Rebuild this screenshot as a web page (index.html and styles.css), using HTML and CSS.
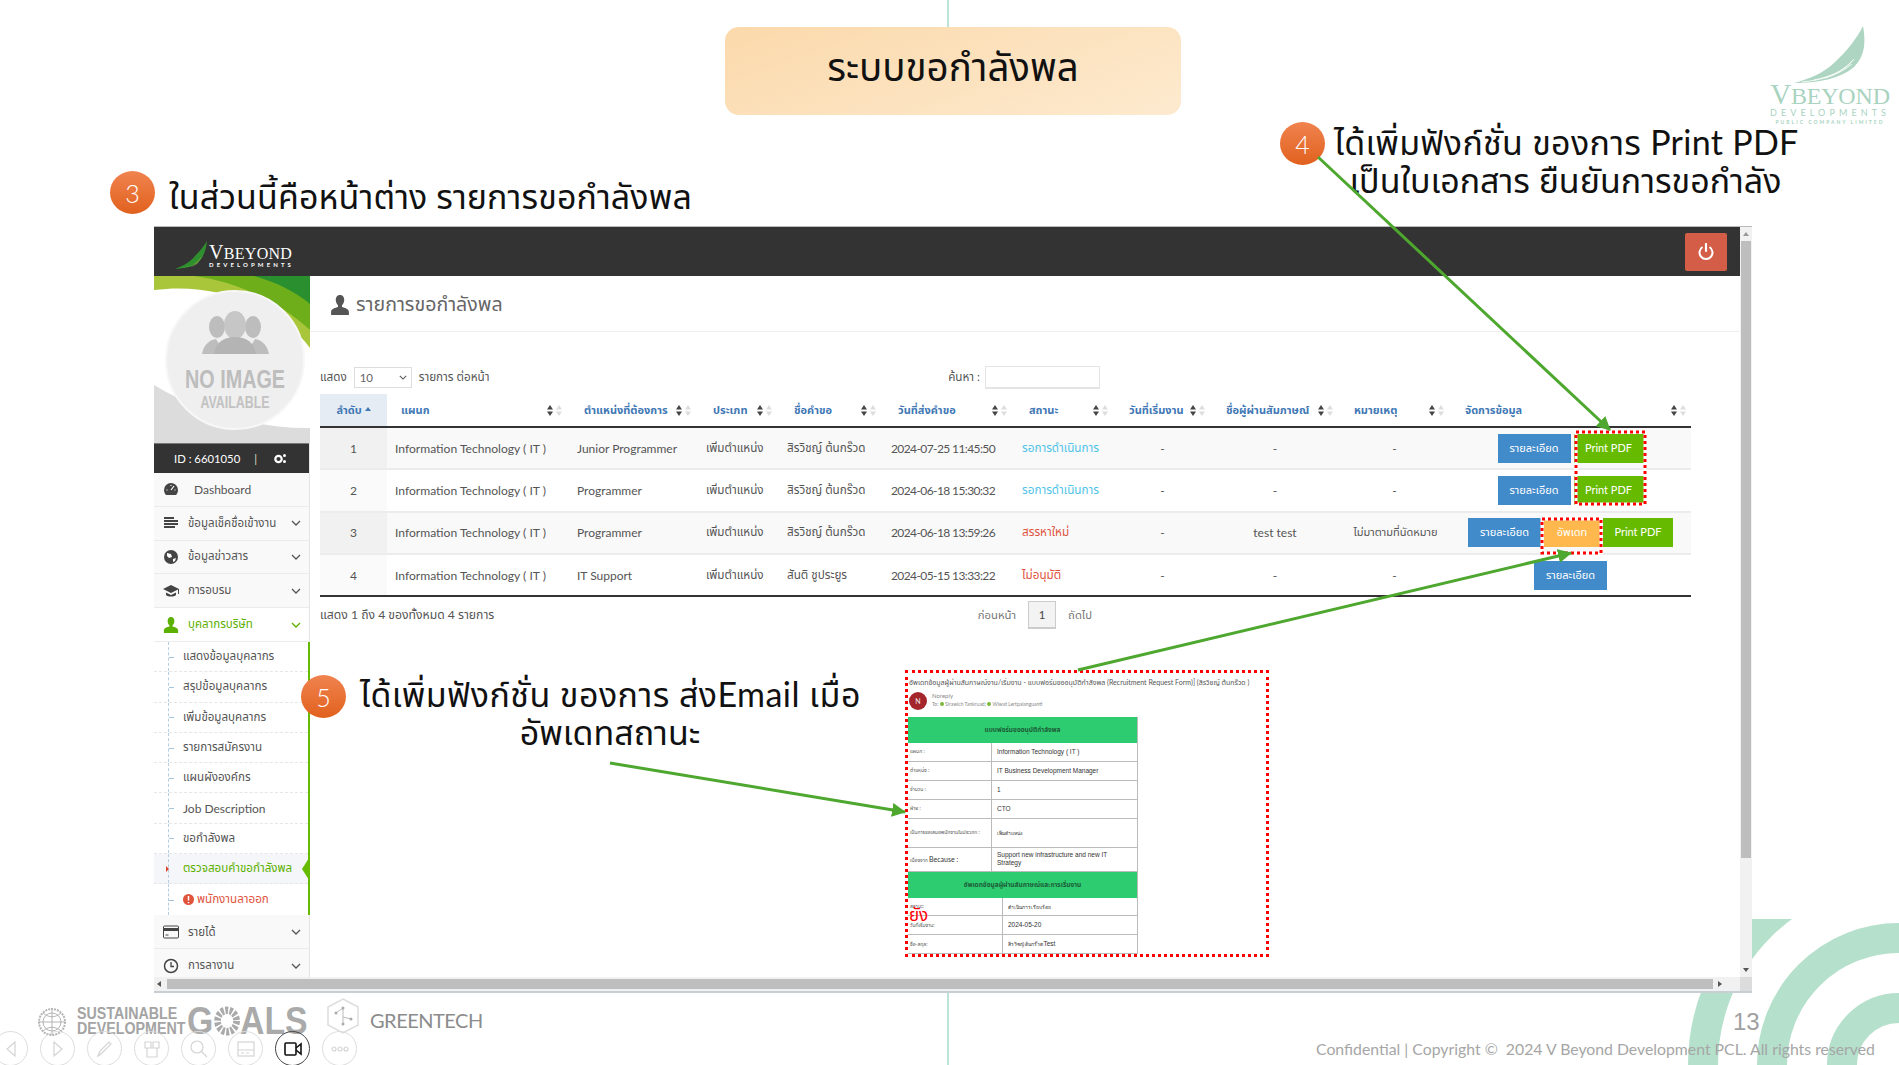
FILE: index.html
```html
<!DOCTYPE html>
<html lang="th">
<head>
<meta charset="utf-8">
<title>ระบบขอกำลังพล</title>
<link rel="stylesheet" href="styles.css">
</head>
<body>
<svg class="defs" width="0" height="0" aria-hidden="true">
  <symbol id="sort" viewBox="0 0 15 11"><path d="M3 0l3 4.400H0zM3 11L0 6.600h6z" fill="#444"/><path d="M12 0l3 4.400H9zM12 11L9 6.600h6z" fill="#ddd"/></symbol>
  <symbol id="chev" viewBox="0 0 10 6"><path d="M1 1l4 4 4-4" fill="none" stroke="currentColor" stroke-width="1.300"/></symbol>
  <symbol id="user" viewBox="0 0 18 18"><path d="M9 0c2.600 0 3.800 2 3.800 4.600 0 2-.9 3.800-2 4.700v1.500c2.200.7 6.200 1.700 6.200 4.200V18H1v-3c0-2.500 4-3.500 6.200-4.200V9.300c-1.100-.9-2-2.700-2-4.700C5.200 2 6.400 0 9 0z" fill="currentColor"/></symbol>
</svg>
<div class="slide">
  <svg class="decor" width="1899" height="1065" viewBox="0 0 1899 1065" aria-hidden="true">
    <defs><clipPath id="ringclip"><rect x="1500" y="919" width="399" height="146"/></clipPath></defs>
    <path d="M948 0V27M948 990V1065" stroke="#a3dcc9" stroke-width="1.500"/>
    <g fill="none" stroke="#b5e0cc" stroke-width="30" clip-path="url(#ringclip)">
      <circle cx="1899" cy="1065" r="196"/><circle cx="1899" cy="1065" r="127"/><circle cx="1899" cy="1065" r="57"/>
    </g>
  </svg>

  <div class="title-box">ระบบขอกำลังพล</div>

  <div class="corner-logo">
    <svg width="72" height="58" viewBox="0 0 72 58" aria-hidden="true"><path d="M69 0c3 16 2 30-9 41-14 12-36 16-60 16 15-4 30-10 41-21C53 25 63 12 69 0z" fill="#aed5c2"/><path d="M8 56c20-2 37-7 50-18M20 54c15-3 28-8 38-19M30 52c12-3 22-9 30-19" stroke="#fff" fill="none" stroke-width=".8"/></svg>
    <div class="corner-name"><span class="big">V</span>BEYOND</div>
    <div class="corner-dev">DEVELOPMENTS</div>
    <div class="corner-pcl">PUBLIC COMPANY LIMITED</div>
  </div>

  <div class="badge badge-3">3</div>
  <div class="callout callout-3">ในส่วนนี้คือหน้าต่าง รายการขอกำลังพล</div>
  <div class="badge badge-4">4</div>
  <div class="callout callout-4"><span class="l-wide">ได้เพิ่มฟังก์ชั่น ของการ Print PDF</span><br><span>เป็นใบเอกสาร ยืนยันการขอกำลัง</span></div>

  <div class="window">
    <div class="app">
      <header class="topbar">
        <div class="brand">
          <svg width="33" height="28" viewBox="0 0 33 28" aria-hidden="true"><path d="M32 0c-1 10-4 19-13 24-5 3-12 3-19 4 8-3 15-7 20-13 5-5 9-10 12-15z" fill="#2f8f2f"/><path d="M28 14c-3 7-10 11-22 13 10-1 18-6 22-13z" fill="#8cc63f"/><path d="M25 19c-3 4-8 7-14 8 6-1 11-3 14-8z" fill="#d7e36a"/></svg>
          <div class="brand-text"><div class="brand-name"><span class="big">V</span>BEYOND</div><div class="brand-sub">DEVELOPMENTS</div></div>
        </div>
        <button class="power" aria-label="ออกจากระบบ"><svg width="16" height="18" viewBox="0 0 16 18"><path d="M8 1v7" stroke="#fff" stroke-width="2.200" stroke-linecap="round"/><path d="M4.500 4A6.500 6.500 0 1 0 11.500 4" fill="none" stroke="#fff" stroke-width="2"/></svg></button>
      </header>
      <div class="body">
        <aside class="sidebar">
          <div class="avatar">
            <svg width="156" height="167" viewBox="0 0 156 167" role="img">
              <rect width="156" height="167" fill="#fff"/>
              <path d="M0 0h156v72C130 36 70 5 0 14z" fill="#a9c63a"/>
              <path d="M40 0h116v54C125 26 85 6 40 0z" fill="#6fae1b"/>
              <path d="M100 0h56v28c-14-12-34-22-56-28z" fill="#2a8f2e"/>
              <path d="M0 109c50 30 110 44 156 43v15H0z" fill="#dcdcdc"/>
              <circle cx="81" cy="84" r="69" fill="#efefef"/>
              <circle cx="81" cy="84" r="69" fill="none" stroke="#f7f7f7" stroke-width="2"/>
              <g fill="#bdbdbd"><ellipse cx="63" cy="51" rx="8" ry="11"/><ellipse cx="99" cy="51" rx="8" ry="11"/><path d="M48 78c2-10 8-14 14-15l9 15zM115 78c-2-10-8-14-14-15l-9 15z"/></g>
              <ellipse cx="81" cy="49" rx="11" ry="14" fill="#c6c6c6"/><path d="M60 78c2-12 10-17 21-17s19 5 21 17z" fill="#b4b4b4"/>
              <text x="81" y="112" class="noimg-a" textLength="100" lengthAdjust="spacingAndGlyphs">NO IMAGE</text>
              <text x="81" y="132" class="noimg-b" textLength="69" lengthAdjust="spacingAndGlyphs">AVAILABLE</text>
            </svg>
          </div>
          <div class="idbar"><span>ID : 6601050</span><span class="idsep">|</span><svg width="13" height="11" viewBox="0 0 13 11" aria-hidden="true"><circle cx="4.500" cy="6" r="3.200" fill="none" stroke="#fff" stroke-width="2.200"/><circle cx="10.500" cy="2.500" r="1.500" fill="#fff"/><circle cx="10.500" cy="8.500" r="1.500" fill="#fff"/></svg></div>
          <nav class="menu">
            <a class="item"><svg class="ico" viewBox="0 0 16 16"><path d="M8 2a7 7 0 0 0-7 7c0 2 .8 3.700 2 5h10c1.200-1.300 2-3 2-5a7 7 0 0 0-7-7z" fill="#444"/><path d="M8 9l3-4M3.500 9h1M11.500 9h1M8 4v1" stroke="#fff" stroke-width="1.200"/></svg><span class="lbl lbl-dash">Dashboard</span></a>
            <a class="item"><svg class="ico" viewBox="0 0 16 16"><path d="M1 3h10M1 6h14M1 9h14M1 12h11" stroke="#444" stroke-width="1.800"/></svg><span class="lbl">ข้อมูลเช็คชื่อเข้างาน</span><svg class="chev"><use href="#chev"/></svg></a>
            <a class="item"><svg class="ico" viewBox="0 0 16 16"><circle cx="8" cy="8" r="7" fill="#444"/><path d="M4 4l4 1 1 3-3 1-2-2zM10 10l3-1-1 3-2 1z" fill="#fff"/></svg><span class="lbl">ข้อมูลข่าวสาร</span><svg class="chev"><use href="#chev"/></svg></a>
            <a class="item"><svg class="ico" viewBox="0 0 16 16"><path d="M8 2L0 6l8 4 7-3.500V11h1V6zM3 9.500V12c2 2 8 2 10 0V9.500L8 12z" fill="#444"/></svg><span class="lbl">การอบรม</span><svg class="chev"><use href="#chev"/></svg></a>
            <a class="item item-open"><svg class="ico"><use href="#user"/></svg><span class="lbl">บุคลากรบริษัท</span><svg class="chev"><use href="#chev"/></svg></a>
            <div class="subs">
              <a class="sub">แสดงข้อมูลบุคลากร</a>
              <a class="sub">สรุปข้อมูลบุคลากร</a>
              <a class="sub">เพิ่มข้อมูลบุคลากร</a>
              <a class="sub">รายการสมัครงาน</a>
              <a class="sub">แผนผังองค์กร</a>
              <a class="sub sub-en">Job Description</a>
              <a class="sub">ขอกำลังพล</a>
              <a class="sub sub-active"><i class="pin"></i>ตรวจสอบคำขอกำลังพล</a>
              <a class="sub sub-red"><svg width="11" height="11" viewBox="0 0 11 11" aria-hidden="true"><circle cx="5.500" cy="5.500" r="5.500" fill="#e0533d"/><path d="M5.500 2v4.500M5.500 8v1.300" stroke="#fff" stroke-width="1.500"/></svg>พนักงานลาออก</a>
            </div>
            <a class="item"><svg class="ico" viewBox="0 0 16 16"><rect x="0.500" y="2" width="15" height="12" rx="1" fill="none" stroke="#444"/><rect x="0.500" y="4" width="15" height="3" fill="#444"/><path d="M2.500 11h3" stroke="#444"/></svg><span class="lbl">รายได้</span><svg class="chev"><use href="#chev"/></svg></a>
            <a class="item"><svg class="ico" viewBox="0 0 16 16"><circle cx="8" cy="8" r="6.500" fill="none" stroke="#444" stroke-width="1.500"/><path d="M8 4v4.500h3" fill="none" stroke="#444" stroke-width="1.300"/></svg><span class="lbl">การลางาน</span><svg class="chev"><use href="#chev"/></svg></a>
          </nav>
        </aside>
        <main class="main">
          <h1 class="page-head"><svg class="head-ico"><use href="#user"/></svg>รายการขอกำลังพล</h1>
          <div class="content">
            <div class="filters">
              <div class="filter-left"><span>แสดง</span><span class="select">10<svg class="chev-s"><use href="#chev"/></svg></span><span>รายการ ต่อหน้า</span></div>
              <div class="filter-right"><span>ค้นหา :</span><span class="search"></span></div>
            </div>
            <table class="grid">
              <colgroup><col class="c1"><col class="c2"><col class="c3"><col class="c4"><col class="c5"><col class="c6"><col class="c7"><col class="c8"><col class="c9"><col class="c10"><col class="c11"></colgroup>
              <thead>
                <tr>
                  <th class="th-sorted"><span class="th-center">ลำดับ <i class="caret"></i></span></th>
                  <th><span class="th-in">แผนก<svg class="sort"><use href="#sort"/></svg></span></th>
                  <th><span class="th-in">ตำแหน่งที่ต้องการ<svg class="sort"><use href="#sort"/></svg></span></th>
                  <th><span class="th-in">ประเภท<svg class="sort"><use href="#sort"/></svg></span></th>
                  <th><span class="th-in">ชื่อคำขอ<svg class="sort"><use href="#sort"/></svg></span></th>
                  <th><span class="th-in">วันที่ส่งคำขอ<svg class="sort"><use href="#sort"/></svg></span></th>
                  <th class="th-mid"><span class="th-in">สถานะ<svg class="sort"><use href="#sort"/></svg></span></th>
                  <th class="th-left"><span class="th-in">วันที่เริ่มงาน<svg class="sort"><use href="#sort"/></svg></span></th>
                  <th class="th-left"><span class="th-in">ชื่อผู้ผ่านสัมภาษณ์<svg class="sort"><use href="#sort"/></svg></span></th>
                  <th class="th-left"><span class="th-in">หมายเหตุ<svg class="sort"><use href="#sort"/></svg></span></th>
                  <th class="th-last"><span class="th-in">จัดการข้อมูล<svg class="sort"><use href="#sort"/></svg></span></th>
                </tr>
              </thead>
              <tbody>
                <tr class="odd">
                  <td class="num">1</td><td class="en">Information Technology ( IT )</td><td>Junior Programmer</td><td class="th">เพิ่มตำแหน่ง</td><td class="th">สิรวิชญ์ ต้นกร๊วด</td><td class="date">2024-07-25 11:45:50</td><td class="th st-wait">รอการดำเนินการ</td><td class="ctr">-</td><td class="ctr">-</td><td class="ctr">-</td>
                  <td class="actions"><a class="btn btn-blue">รายละเอียด</a><a class="btn btn-green">Print PDF</a></td>
                </tr>
                <tr>
                  <td class="num">2</td><td class="en">Information Technology ( IT )</td><td>Programmer</td><td class="th">เพิ่มตำแหน่ง</td><td class="th">สิรวิชญ์ ต้นกร๊วด</td><td class="date">2024-06-18 15:30:32</td><td class="th st-wait">รอการดำเนินการ</td><td class="ctr">-</td><td class="ctr">-</td><td class="ctr">-</td>
                  <td class="actions"><a class="btn btn-blue">รายละเอียด</a><a class="btn btn-green">Print PDF</a></td>
                </tr>
                <tr class="odd">
                  <td class="num">3</td><td class="en">Information Technology ( IT )</td><td>Programmer</td><td class="th">เพิ่มตำแหน่ง</td><td class="th">สิรวิชญ์ ต้นกร๊วด</td><td class="date">2024-06-18 13:59:26</td><td class="th st-red">สรรหาใหม่</td><td class="ctr">-</td><td class="ctr">test test</td><td class="ctr th-note">ไม่มาตามที่นัดหมาย</td>
                  <td class="actions"><a class="btn btn-blue">รายละเอียด</a><a class="btn btn-orange">อัพเดท</a><a class="btn btn-green">Print PDF</a></td>
                </tr>
                <tr>
                  <td class="num">4</td><td class="en">Information Technology ( IT )</td><td>IT Support</td><td class="th">เพิ่มตำแหน่ง</td><td class="th">สันติ ชูประยูร</td><td class="date">2024-05-15 13:33:22</td><td class="th st-red">ไม่อนุมัติ</td><td class="ctr">-</td><td class="ctr">-</td><td class="ctr">-</td>
                  <td class="actions"><a class="btn btn-blue">รายละเอียด</a></td>
                </tr>
              </tbody>
            </table>
            <div class="table-foot">
              <span>แสดง 1 ถึง 4 ของทั้งหมด 4 รายการ</span>
              <div class="pager"><span>ก่อนหน้า</span><span class="page-num">1</span><span>ถัดไป</span></div>
            </div>
          </div>
        </main>
      </div>
    </div>
    <div class="vscroll"><span class="arrow-up"></span><span class="vthumb"></span><span class="arrow-down"></span></div>
    <div class="hscroll"><span class="arrow-left"></span><span class="hthumb"></span><span class="arrow-right"></span></div>
    <div class="scroll-corner"></div>
  </div>

  <div class="badge badge-5">5</div>
  <div class="callout callout-5"><span class="l-wider">ได้เพิ่มฟังก์ชั่น ของการ ส่งEmail เมื่อ</span><br><span>อัพเดทสถานะ</span></div>

  <div class="email">
    <div class="email-subject">อัพเดทข้อมูลผู้ผ่านสัมภาษณ์งาน/เริ่มงาน - แบบฟอร์มขออนุมัติกำลังพล (Recruitment Request Form)] (สิรวิชญ์ ต้นกร๊วด )</div>
    <div class="email-from"><span class="email-av">N</span><div><div>Noreply</div><div class="email-to">To: <i></i> Sirawich Tankruad; <i></i> Wiwat Lertpalanguanti</div></div></div>
    <div class="email-table">
      <div class="et-head">แบบฟอร์มขออนุมัติกำลังพล</div>
      <div class="et-row"><span>แผนก :</span><span class="et-val">Information Technology ( IT )</span></div>
      <div class="et-row"><span>ตำแหน่ง :</span><span class="et-val">IT Business Development Manager</span></div>
      <div class="et-row"><span>จำนวน :</span><span class="et-val">1</span></div>
      <div class="et-row"><span>ฝ่าย :</span><span class="et-val">CTO</span></div>
      <div class="et-row et-tall"><span>เป็นการขอเสนอพนักงานในประเภท :</span><span class="et-val et-th">เพิ่มตำแหน่ง</span></div>
      <div class="et-row et-tall2"><span>เนื่องจาก <b>Because :</b></span><span class="et-val et-wrap">Support new infrastructure and new IT Strategy</span></div>
      <div class="et-head">อัพเดทข้อมูลผู้ผ่านสัมภาษณ์และการเริ่มงาน</div>
      <div class="et-row et-b"><span>สถานะ:</span><span class="et-val et-th">ดำเนินการเรียบร้อย</span></div>
      <div class="et-row et-b"><span>วันที่เริ่มงาน:</span><span class="et-val">2024-05-20</span></div>
      <div class="et-row et-b"><span>ชื่อ-สกุล:</span><span class="et-val"><span class="et-th">สิรวิชญ์ ต้นกร๊วด</span>Test</span></div>
    </div>
    <div class="email-yang">ยัง</div>
  </div>

  <svg class="marks" width="1899" height="1065" viewBox="0 0 1899 1065" aria-hidden="true">
    <defs><marker id="tip" markerWidth="14" markerHeight="14" refX="13" refY="7" orient="auto" markerUnits="userSpaceOnUse"><path d="M0 0L14 7 0 14z" fill="#4ea72e"/></marker></defs>
    <g fill="none" stroke="#fff" stroke-width="3">
      <rect x="1576" y="432" width="69" height="72"/><rect x="1542" y="519" width="59" height="34"/>
    </g>
    <g fill="none" stroke="#f00" stroke-width="3" stroke-dasharray="3 3">
      <rect x="1576" y="432" width="69" height="72"/><rect x="1542" y="519" width="59" height="34"/>
    </g>
    <g stroke="#4ea72e" stroke-width="3" marker-end="url(#tip)">
      <line x1="1318" y1="157" x2="1610" y2="430"/>
      <line x1="1078" y1="670" x2="1571" y2="553"/>
      <line x1="610" y1="763" x2="905" y2="812"/>
    </g>
  </svg>

  <div class="sdg">
    <svg class="un" width="36" height="30" viewBox="0 0 36 30" aria-hidden="true"><g fill="none" stroke="#b4b4b4"><circle cx="18" cy="15" r="13" stroke-width="2" stroke-dasharray="2 1"/><circle cx="18" cy="15" r="9"/><path d="M18 2v26M5 15h26M9 6c6 5 12 5 18 0M9 24c6-5 12-5 18 0"/></g></svg>
    <div class="sdg-words"><div class="squeeze">SUSTAINABLE<br>DEVELOPMENT</div></div>
    <div class="sdg-goals"><div class="squeeze goals-row">G<svg class="sdg-o" viewBox="0 0 28 28" aria-hidden="true"><circle cx="14" cy="14" r="10" fill="none" stroke="#aaa" stroke-width="7" stroke-dasharray="3 1.500"/></svg>ALS</div></div>
    <svg class="gt-ico" width="36" height="36" viewBox="0 0 36 36" aria-hidden="true"><path d="M18 1l15 8v18l-15 8-15-8V9z" fill="none" stroke="#ddd" stroke-width="1.500"/><path d="M11 15l7-5v9l8 2M18 19v7" fill="none" stroke="#bbb"/><circle cx="18" cy="10" r="1.500" fill="#aaa"/><circle cx="11" cy="15" r="1.500" fill="#aaa"/><circle cx="26" cy="21" r="1.500" fill="#aaa"/><circle cx="18" cy="26" r="1.500" fill="#aaa"/></svg>
    <div class="gt-name">GREENTECH</div>
  </div>

  <div class="player">
    <span class="pl"><svg viewBox="0 0 20 20"><path d="M14 3L6 10l8 7z"/></svg></span>
    <span class="pl"><svg viewBox="0 0 20 20"><path d="M6 3l8 7-8 7z"/></svg></span>
    <span class="pl"><svg viewBox="0 0 20 20"><path d="M3 17l2-5 9-9 2 2-9 9zM3 17l2-1"/></svg></span>
    <span class="pl"><svg viewBox="0 0 20 20"><path d="M3 3h6v6H3zM11 3h6v6h-6zM5 9h10v9H5z"/></svg></span>
    <span class="pl"><svg viewBox="0 0 20 20"><circle cx="8" cy="8" r="6"/><path d="M12 12l6 6"/></svg></span>
    <span class="pl"><svg viewBox="0 0 20 20"><rect x="2" y="3" width="16" height="14"/><path d="M2 11h16M5 14h3M10 14h3"/></svg></span>
    <span class="pl pl-on"><svg viewBox="0 0 20 20"><rect x="2" y="4" width="11" height="12" rx="1"/><path d="M13 9l5-4v10l-5-4"/></svg></span>
    <span class="pl"><svg viewBox="0 0 20 20"><circle cx="4" cy="10" r="2"/><circle cx="10" cy="10" r="2"/><circle cx="16" cy="10" r="2"/></svg></span>
  </div>

  <div class="page-no">13</div>
  <div class="copyright">Confidential | Copyright ©&nbsp; 2024 V Beyond Development PCL. All rights reserved</div>
</div>
</body>
</html>
```
FILE: styles.css
```css
* { box-sizing: border-box; }
html, body { margin: 0; padding: 0; background: #fff; }
body { font-family: "Lato", "Noto Sans Thai", "Noto Sans", sans-serif; color: #000; }
.defs { position: absolute; }
a { display: block; }

.slide { position: relative; width: 1899px; height: 1065px; overflow: hidden; background: #fff; }
.decor, .marks { position: absolute; left: 0; top: 0; }
.marks { pointer-events: none; }

.title-box { position: absolute; left: 725px; top: 27px; width: 456px; height: 88px; padding-bottom: 4px; border-radius: 14px; background: linear-gradient(160deg, #fbd9ab 0%, #fdeacf 100%); display: flex; align-items: center; justify-content: center; font-size: 38.500px; color: #111; }

.corner-logo { position: absolute; left: 1769px; top: 26px; width: 122px; color: #a9d3bf; text-align: center; display: flex; flex-direction: column; align-items: center; }
.corner-logo svg { display: block; }
.corner-name { font-family: "Liberation Serif", serif; font-size: 24px; line-height: 21px; letter-spacing: -.2px; white-space: nowrap; }
.corner-name .big { font-size: 29px; line-height: 21px; }
.corner-dev { font-size: 9px; line-height: 10px; letter-spacing: 4.100px; white-space: nowrap; margin-top: 1px; }
.corner-pcl { font-size: 5px; line-height: 6px; letter-spacing: 2px; font-weight: 700; white-space: nowrap; margin-top: 1px; }

.badge { position: absolute; width: 45px; height: 43px; border-radius: 50%; background: linear-gradient(180deg, #f0834f, #e1611e); color: #fff; font-size: 25px; font-weight: 300; display: flex; align-items: center; justify-content: center; }
.badge-3 { left: 110px; top: 171px; }
.badge-4 { left: 1280px; top: 122px; }
.badge-5 { left: 301px; top: 675px; }
.callout { position: absolute; font-size: 34px; line-height: 38px; color: #111; text-align: center; white-space: nowrap; }
.callout-3 { left: 169px; top: 177px; letter-spacing: .1px; }
.callout-4 { left: 1334px; top: 123px; width: 463px; }
.callout-5 { left: 360px; top: 675px; width: 500px; }
.l-wide { letter-spacing: .3px; }
.l-wider { letter-spacing: .45px; }

.window { position: absolute; left: 154px; top: 226px; width: 1598px; height: 767px; display: grid; grid-template-columns: 1fr 12px; grid-template-rows: 1fr 14px; background: #fff; border-top: 1px solid #bbb; border-bottom: 2px solid #c9ced2; }
.app { overflow: hidden; display: flex; flex-direction: column; min-width: 0; min-height: 0; }
.topbar { flex: none; height: 49px; background: #333; display: flex; align-items: center; justify-content: space-between; padding: 0 13px 0 21px; }
.brand { display: flex; align-items: flex-end; padding-top: 6px; }
.brand-text { color: #fff; margin-left: 1px; }
.brand-name { font-family: "Liberation Serif", serif; font-size: 16px; line-height: 15px; letter-spacing: .3px; white-space: nowrap; }
.brand-name .big { font-size: 20px; }
.brand-sub { font-size: 6px; line-height: 8px; letter-spacing: 3.100px; font-weight: 700; white-space: nowrap; }
.power { width: 42px; height: 38px; border: 0; border-radius: 2px; background: #d35d47; display: flex; align-items: center; justify-content: center; padding: 0; }

.body { flex: 1; display: flex; min-height: 0; }
.sidebar { flex: none; width: 156px; background: #f9f9f9; border-right: 1px solid #e5e5e5; }
.avatar { height: 167px; }
.avatar svg { display: block; }
.noimg-a { font-size: 25px; font-weight: 700; fill: #bdbdbd; text-anchor: middle; font-family: "Liberation Sans", sans-serif; }
.noimg-b { font-size: 16px; font-weight: 700; fill: #c2c2c2; text-anchor: middle; font-family: "Liberation Sans", sans-serif; }
.idbar { height: 30px; background: #333; color: #fff; font-size: 11.300px; display: flex; align-items: center; padding-left: 20px; border-top: 1px solid #777; }
.idsep { margin: 0 17px 0 14px; color: #ddc; }
.menu { font-size: 11.500px; color: #555; }
.item { height: 33.800px; display: flex; align-items: center; padding: 0 8px 0 9px; border-bottom: 1.500px solid #ebebeb; background: #f9f9f9; }
.ico { width: 16px; height: 16px; color: #444; flex: none; }
.lbl { flex: 1; margin-left: 9px; white-space: nowrap; }
.lbl-dash { margin-left: 15px; font-size: 12px; }
.chev { width: 10px; height: 6px; flex: none; color: #555; }
.item-open { color: #5cb000; background: #fff; }
.item-open .ico, .item-open .chev { color: #5cb000; }
.subs { background: #fff; border-right: 2px solid #66bb00; margin: 0 -1px 1px 0; position: relative; font-size: 11.600px; }
.sub { position: relative; height: 30.300px; display: flex; align-items: center; padding-left: 29px; border-bottom: 1px dashed #e6e6e6; white-space: nowrap; }
.sub::before { content: ""; position: absolute; left: 14px; top: 0; bottom: 0; border-left: 1px dashed #b5cde0; }
.sub::after { content: ""; position: absolute; left: 15px; top: 50%; width: 5px; border-top: 1px dashed #a5c5dc; }
.sub-en { font-size: 12px; }
.sub-active { background: #f4f6f9; color: #5cb000; }
.sub-active::after { left: auto; right: -1px; top: 50%; width: 0; margin-top: -11px; border-top: 11px solid transparent; border-bottom: 11px solid transparent; border-right: 7px solid #66bb00; }
.pin { position: absolute; left: 12px; top: 50%; margin-top: -3px; border-top: 3px solid transparent; border-bottom: 3px solid transparent; border-left: 3px solid #d9432f; }
.sub-red { color: #e0533d; border-bottom: 0; }
.sub-red svg { margin-right: 3px; }

.main { flex: 1; min-width: 0; background: #fff; }
.page-head { margin: 0; height: 56px; padding-top: 2px; display: flex; align-items: center; font-size: 19.600px; font-weight: 400; color: #666; padding-left: 20px; border-bottom: 1.500px solid #eee; }
.head-ico { width: 20px; height: 20px; color: #555; margin-right: 6px; }
.content { padding: 34px 0 0 10px; font-size: 12px; color: #555; }
.filters { width: 780px; height: 23px; display: flex; justify-content: space-between; align-items: center; color: #555; font-size: 11.700px; }
.filter-left, .filter-right { display: flex; align-items: center; }
.select { width: 58px; height: 21px; border: 1px solid #ddd; margin: 0 7px; padding-left: 5px; display: flex; align-items: center; justify-content: space-between; padding-right: 4px; color: #666; font-size: 11.500px; }
.chev-s { width: 8px; height: 5px; color: #555; }
.search { width: 115px; height: 23px; border: 1px solid #e4e4e4; border-bottom-width: 2px; margin-left: 5px; }

.grid { border-collapse: collapse; table-layout: fixed; width: 1371px; margin-top: 5px; color: #555; font-size: 12px; }
.c1 { width: 67px; } .c2 { width: 183px; } .c3 { width: 129px; } .c4 { width: 81px; } .c5 { width: 104px; } .c6 { width: 131px; } .c7 { width: 105px; } .c8 { width: 97px; } .c9 { width: 128px; } .c10 { width: 111px; } .c11 { width: 235px; }
.grid th { height: 33px; padding: 0 8px 0 14px; font-weight: 700; color: #3f78b5; text-align: left; border-bottom: 2px solid #333; font-size: 11px; white-space: nowrap; }
.grid th.th-mid { padding-right: 12px; }
.grid th.th-left { padding: 0 12px 0 9px; }
.grid th.th-last { padding: 0 5px 0 9px; }
.th-in { display: flex; justify-content: space-between; align-items: center; }
.th-sorted { background: #e6ecf4; }
.grid th.th-sorted { text-align: center; padding: 0; }
.caret { display: inline-block; border: 3px solid transparent; border-bottom: 4px solid #3f78b5; border-top: 0; vertical-align: 3px; }
.sort { width: 15px; height: 11px; flex: none; }
.grid td { height: 42.300px; padding: 0 7px; border-bottom: 2px solid #ececec; white-space: nowrap; }
.grid tbody tr:last-child td { border-bottom: 2px solid #333; }
.odd td { background: #f9f9f9; }
.grid td.num { text-align: center; background: #fafafa; }
.odd td.num { background: #f1f1f1; }
.grid td.en { padding-left: 8px; font-size: 12.100px; }
.grid td.th { font-size: 11.700px; }
.grid td.date { letter-spacing: -.6px; }
.grid td.ctr { text-align: center; padding: 0 19px 0 7px; }
.grid td.th-note { font-size: 11px; padding: 0 10px 0 0; }
.st-wait { color: #4fc3e8; }
.st-red { color: #e0533d; }
.grid td.actions { padding: 0 6px 0 0; font-size: 0; text-align: center; }
.btn { display: inline-block; height: 29px; line-height: 28px; font-size: 11px; color: #fff; text-align: center; margin-left: 3px; }
.btn:first-child { margin-left: 0; }
.btn-blue { width: 73px; background: #428bca; }
.btn-green { width: 70px; background: #66bb00; }
.btn-orange { width: 56px; background: #ffb84d; }
.table-foot { width: 772px; display: flex; justify-content: space-between; align-items: center; margin-top: 4px; height: 28px; font-size: 12.200px; }
.pager { display: flex; align-items: center; gap: 12px; font-size: 11.300px; color: #777; }
.page-num { width: 28px; height: 28px; border: 1px solid #ccc; border-bottom-width: 2px; background: #f3f3f3; display: flex; align-items: center; justify-content: center; color: #444; }

.vscroll { grid-column: 2; grid-row: 1; background: #f1f1f1; position: relative; }
.vthumb { position: absolute; left: 1px; right: 1px; top: 14px; height: 617px; background: #bebebe; }
.arrow-up { position: absolute; left: 3px; top: 5px; border: 3px solid transparent; border-bottom: 4px solid #999; border-top: 0; }
.arrow-down { position: absolute; left: 3px; bottom: 5px; border: 3px solid transparent; border-top: 4px solid #555; border-bottom: 0; }
.hscroll { grid-column: 1; grid-row: 2; background: #f1f1f1; position: relative; }
.hthumb { position: absolute; left: 13px; width: 1546px; top: 2px; bottom: 2px; background: #bebebe; }
.arrow-left { position: absolute; left: 3px; top: 4px; border: 3px solid transparent; border-right: 4px solid #555; border-left: 0; }
.arrow-right { position: absolute; right: 18px; top: 4px; border: 3px solid transparent; border-left: 4px solid #555; border-right: 0; }
.scroll-corner { grid-column: 2; grid-row: 2; background: #dcdcdc; }

.email { position: absolute; left: 905px; top: 670px; width: 364px; height: 287px; background: #fff; border: 3px dotted #f00; padding: 3px 0 0 1px; color: #333; }
.email-subject { font-size: 7px; line-height: 12px; white-space: nowrap; color: #555; }
.email-from { display: flex; gap: 5px; margin-top: 4px; font-size: 6px; line-height: 8px; color: #888; }
.email-av { width: 18px; height: 18px; border-radius: 50%; background: #a4262c; color: #eee; font-size: 7px; display: flex; align-items: center; justify-content: center; }
.email-to { font-size: 5px; }
.email-to i { display: inline-block; width: 4px; height: 4px; border-radius: 50%; background: #7db83a; }
.email-table { width: 230px; margin: 7px 0 0 -1px; border-right: 1px solid #bbb; font-size: 7px; color: #333; }
.et-head { height: 26px; background: #2ecc71; display: flex; align-items: center; justify-content: center; font-weight: 700; font-size: 6.500px; color: #1c5c37; }
.et-row { height: 18.900px; display: grid; grid-template-columns: 81px 1fr; align-items: center; border-bottom: 1px solid #bbb; padding-left: 2px; font-size: 5px; color: #555; }
.et-tall { height: 29px; }
.et-tall2 { height: 24px; }
.et-tall2 b { font-weight: 400; font-size: 7px; color: #333; }
.et-b { grid-template-columns: 92px 1fr; }
.et-val { font-family: "Liberation Sans", sans-serif; font-size: 6.500px; line-height: 8px; color: #333; border-left: 1px solid #bbb; height: 100%; display: flex; align-items: center; padding-left: 5px; }
.et-wrap { padding-right: 8px; }
.et-th { font-size: 5px; }
.email-yang { position: absolute; left: 1px; top: 232px; color: #f00; font-size: 17px; line-height: 20px; }

.sdg { position: absolute; left: 34px; top: 998px; display: flex; align-items: flex-start; color: #aaa; height: 36px; }
.sdg .un { margin-top: 9px; }
.squeeze { transform-origin: left center; transform: scaleX(.89); white-space: nowrap; }
.sdg-words { width: 108px; font-family: "Liberation Sans", sans-serif; font-weight: 700; font-size: 16px; line-height: 15px; margin: 8px 0 0 7px; color: #a4a4a4; }
.sdg-goals { width: 116px; font-family: "Liberation Sans", sans-serif; font-weight: 700; font-size: 38px; line-height: 36px; margin: 5px 0 0 2px; color: #aaa; }
.goals-row { display: flex; align-items: center; }
.sdg-o { width: 30px; height: 30px; flex: none; }
.gt-ico { margin-left: 22px; }
.gt-name { font-size: 20px; line-height: 24px; margin: 10px 0 0 9px; color: #8c8c8c; letter-spacing: -.5px; }

.player { position: absolute; left: -7px; top: 1031px; display: flex; gap: 12px; }
.pl { width: 35px; height: 35px; border-radius: 50%; border: 1px solid #ddd; display: flex; align-items: center; justify-content: center; }
.pl svg { width: 20px; height: 20px; fill: none; stroke: #d4d4d4; stroke-width: 1.200; }
.pl-on { border-color: #444; }
.pl-on svg { stroke: #111; stroke-width: 1.600; }

.page-no { position: absolute; left: 1733px; top: 1009px; font-size: 24px; line-height: 26px; color: #a0a0a0; font-family: "Liberation Sans", sans-serif; }
.copyright { position: absolute; left: 1316px; top: 1039px; font-size: 15.800px; line-height: 20px; color: #a6a6a6; white-space: nowrap; }
```
